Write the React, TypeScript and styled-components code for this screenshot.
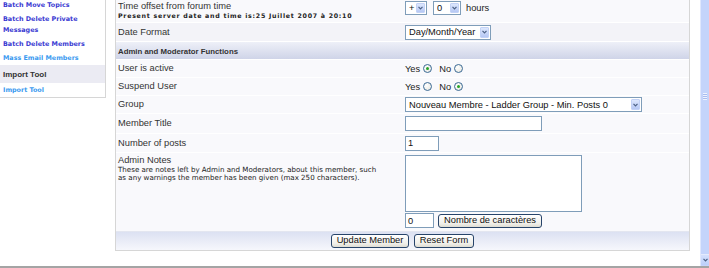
import React from "react";
import styled, { createGlobalStyle } from "styled-components";

const Global = createGlobalStyle`
  html, body { margin: 0; padding: 0; background: #fff; overflow: hidden; }
  body { font-family: "Liberation Sans", Arial, sans-serif; }
  * { box-sizing: border-box; }
`;

const Window = styled.div`
  width: 709px;
  height: 268px;
  display: flex;
  flex-direction: column;
  background: #fff;
  overflow: hidden;
`;

const Viewport = styled.div`
  height: 268px;
  display: flex;
  border-bottom: 2px solid #a4a4a4;
  overflow: hidden;
`;

const Page = styled.div`
  width: 700px;
  display: flex;
  align-items: flex-start;
  gap: 9px;
  padding-right: 10px;
  margin-top: -2px;
`;

/* ---------- sidebar ---------- */
const Sidebar = styled.nav`
  width: 106px;
  flex: none;
  border-right: 1px solid #d6d6d6;
  border-bottom: 1px solid #d6d6d6;
  background: #fff;
  display: flex;
  flex-direction: column;
`;

const SideLink = styled.a<{ $light?: boolean }>`
  display: block;
  padding: 2px 3px 1px 3px;
  line-height: 11px;
  font-family: "DejaVu Sans", Verdana, sans-serif;
  font-weight: bold;
  font-size: 6.4px;
  color: ${(p) => (p.$light ? "#3a9af0" : "#3a3ad2")};
  text-decoration: none;
`;

const SideHead = styled.div`
  height: 18px;
  display: flex;
  align-items: center;
  padding: 1px 3px 0 3px;
  background: #ebebf3;
  font-weight: bold;
  font-size: 8px;
  color: #333;
`;

/* ---------- main panel ---------- */
const Panel = styled.section`
  width: 575px;
  flex: none;
  border-left: 1px solid #d6d6d6;
  border-right: 1px solid #d6d6d6;
  border-bottom: 1px solid #d6d6d6;
  background: #f8f8fb;
  display: flex;
  flex-direction: column;
`;

const Row = styled.div<{ $h: number; $shade?: boolean; $top?: boolean }>`
  height: ${(p) => p.$h}px;
  display: grid;
  grid-template-columns: 289px 1fr;
  align-items: ${(p) => (p.$top ? "start" : "center")};
  background: ${(p) => (p.$shade ? "#f3f3f8" : "#f9f9fc")};
  border-top: 1px solid #ffffff;
`;

const LabelCell = styled.div<{ $pt?: number }>`
  padding-left: 2px;
  padding-top: ${(p) => p.$pt ?? 0}px;
  color: #333;
`;

const Label = styled.div`
  font-size: 9.3px;
  line-height: 11px;
  white-space: nowrap;
`;

const Note = styled.div<{ $bold?: boolean; $w?: number }>`
  font-family: "DejaVu Sans", Verdana, sans-serif;
  font-size: ${(p) => (p.$bold ? "6.3px" : "7.1px")};
  font-weight: ${(p) => (p.$bold ? "bold" : "normal")};
  letter-spacing: ${(p) => (p.$bold ? "0.72px" : "0")};
  line-height: ${(p) => (p.$bold ? "8px" : "8.4px")};
  max-width: ${(p) => (p.$w ? `${p.$w}px` : "none")};
  color: #222;
  white-space: ${(p) => (p.$w ? "normal" : "nowrap")};
`;

const ControlCell = styled.div<{ $pt?: number; $col?: boolean }>`
  display: flex;
  flex-direction: ${(p) => (p.$col ? "column" : "row")};
  align-items: ${(p) => (p.$col ? "flex-start" : "center")};
  gap: ${(p) => (p.$col ? "1px" : "0")};
  padding-top: ${(p) => p.$pt ?? 0}px;
  font-size: 9.3px;
  color: #222;
`;

const Header = styled.div`
  height: 18px;
  display: flex;
  align-items: center;
  padding: 1px 2px 0 2px;
  background: linear-gradient(to bottom, #eef0f8, #cfd4e8);
  font-weight: bold;
  font-size: 7.8px;
  color: #333;
  border-top: 1px solid #ffffff;
`;

const Footer = styled.div`
  height: 19px;
  display: flex;
  align-items: center;
  justify-content: center;
  gap: 5px;
  background: linear-gradient(to bottom, #dce1f2, #f6f7fc);
  border-top: 1px solid #e3e6f0;
`;

/* ---------- controls ---------- */
const SelectBox = styled.div<{ $w: number; $h: number }>`
  width: ${(p) => p.$w}px;
  height: ${(p) => p.$h}px;
  border: 1px solid #7f9db9;
  background: #fff;
  display: flex;
  align-items: center;
  padding: 1px 1px 1px 3px;
  font-size: 9.3px;
  color: #111;
`;

const SelectText = styled.span`
  flex: 1;
  white-space: nowrap;
  overflow: hidden;
`;

const DropBtn = styled.span`
  width: 9px;
  align-self: stretch;
  border-radius: 1px;
  background: linear-gradient(to bottom, #dde7fd, #b6c8f4);
  border: 1px solid #c3d2f6;
  display: flex;
  align-items: center;
  justify-content: center;
`;

const Chevron = () => (
  <svg width="5" height="4" viewBox="0 0 5 4">
    <path d="M0.5 0.8 L2.5 2.8 L4.5 0.8" fill="none" stroke="#4d6185" strokeWidth="1.2" />
  </svg>
);

const Select: React.FC<{ w: number; h: number; value: string }> = ({ w, h, value }) => (
  <SelectBox $w={w} $h={h}>
    <SelectText>{value}</SelectText>
    <DropBtn>
      <Chevron />
    </DropBtn>
  </SelectBox>
);

const TextInput = styled.div<{ $w: number; $h: number }>`
  width: ${(p) => p.$w}px;
  height: ${(p) => p.$h}px;
  border: 1px solid #7f9db9;
  background: #fff;
  padding-left: 2px;
  display: flex;
  align-items: center;
  font-size: 9.3px;
  color: #111;
`;

const Button = styled.button<{ $w: number; $h: number }>`
  width: ${(p) => p.$w}px;
  height: ${(p) => p.$h}px;
  padding: 0;
  border: 1px solid #27446a;
  border-radius: 3px;
  background: linear-gradient(to bottom, #ffffff, #f0efea 70%, #dedcd2);
  font-family: "Liberation Sans", Arial, sans-serif;
  font-size: 9.3px;
  color: #111;
  line-height: 1;
`;

const Word = styled.span<{ $ml?: number; $mr?: number }>`
  margin-left: ${(p) => p.$ml ?? 0}px;
  margin-right: ${(p) => p.$mr ?? 0}px;
  font-size: 9.3px;
  color: #222;
`;

const Radio = styled.span<{ $on?: boolean }>`
  width: 9px;
  height: 9px;
  border-radius: 50%;
  border: 1px solid #3b6a95;
  background: radial-gradient(circle at 35% 35%, #ffffff, #e4e4dc);
  display: inline-flex;
  align-items: center;
  justify-content: center;
  &::after {
    content: "";
    width: 3px;
    height: 3px;
    border-radius: 50%;
    background: ${(p) => (p.$on ? "#27a327" : "transparent")};
  }
`;

const TextArea = styled.div`
  width: 177px;
  height: 57px;
  border: 1px solid #7f9db9;
  background: #fff;
`;

const CountLine = styled.div`
  display: flex;
  align-items: center;
  gap: 4px;
`;

/* ---------- scrollbar ---------- */
const ScrollBar = styled.div`
  width: 9px;
  flex: none;
  display: flex;
  flex-direction: column;
  background: #c4d4fb;
  border-left: 1px solid #dfe7fd;
`;

const Thumb = styled.div`
  flex: 1;
  display: flex;
  justify-content: center;
  padding-top: 93px;
`;

const Grip = styled.div`
  width: 4px;
  height: 7px;
  background: repeating-linear-gradient(to bottom, #eef3ff 0 1px, #a8bdf0 1px 2px);
`;

const ArrowBtn = styled.div`
  height: 11px;
  margin-bottom: 1px;
  display: flex;
  align-items: center;
  justify-content: center;
  background: linear-gradient(to bottom, #d4e0fd, #bccff9);
  border-top: 1px solid #e4ebfd;
`;

export default function App() {
  return (
    <Window>
      <Global />
      <Viewport>
        <Page>
          <Sidebar>
            <SideLink href="#">Batch Move Topics</SideLink>
            <SideLink href="#">Batch Delete Private Messages</SideLink>
            <SideLink href="#">Batch Delete Members</SideLink>
            <SideLink href="#" $light>
              Mass Email Members
            </SideLink>
            <SideHead>Import Tool</SideHead>
            <SideLink href="#" $light>
              Import Tool
            </SideLink>
          </Sidebar>

          <Panel>
            <Row $h={24} $top>
              <LabelCell $pt={2}>
                <Label>Time offset from forum time</Label>
                <Note $bold>Present server date and time is:25 Juillet 2007 à 20:10</Note>
              </LabelCell>
              <ControlCell $pt={2}>
                <Select w={22} h={14} value="+" />
                <Word $ml={6} />
                <Select w={28} h={14} value="0" />
                <Word $ml={5}>hours</Word>
              </ControlCell>
            </Row>
            <Row $h={19} $shade>
              <LabelCell>
                <Label>Date Format</Label>
              </LabelCell>
              <ControlCell>
                <Select w={86} h={15} value="Day/Month/Year" />
              </ControlCell>
            </Row>
            <Header>Admin and Moderator Functions</Header>
            <Row $h={18}>
              <LabelCell>
                <Label>User is active</Label>
              </LabelCell>
              <ControlCell>
                <Word $mr={3}>Yes</Word>
                <Radio $on />
                <Word $ml={7} $mr={3}>
                  No
                </Word>
                <Radio />
              </ControlCell>
            </Row>
            <Row $h={18}>
              <LabelCell>
                <Label>Suspend User</Label>
              </LabelCell>
              <ControlCell>
                <Word $mr={3}>Yes</Word>
                <Radio />
                <Word $ml={7} $mr={3}>
                  No
                </Word>
                <Radio $on />
              </ControlCell>
            </Row>
            <Row $h={18}>
              <LabelCell>
                <Label>Group</Label>
              </LabelCell>
              <ControlCell>
                <Select w={237} h={15} value="Nouveau Membre - Ladder Group - Min. Posts 0" />
              </ControlCell>
            </Row>
            <Row $h={20}>
              <LabelCell>
                <Label>Member Title</Label>
              </LabelCell>
              <ControlCell>
                <TextInput $w={137} $h={15} />
              </ControlCell>
            </Row>
            <Row $h={19}>
              <LabelCell>
                <Label>Number of posts</Label>
              </LabelCell>
              <ControlCell>
                <TextInput $w={34} $h={15}>1</TextInput>
              </ControlCell>
            </Row>
            <Row $h={79} $top>
              <LabelCell $pt={2}>
                <Label>Admin Notes</Label>
                <Note $w={268}>
                  These are notes left by Admin and Moderators, about this member, such as any warnings the
                  member has been given (max 250 characters).
                </Note>
              </LabelCell>
              <ControlCell $pt={2} $col>
                <TextArea />
                <CountLine>
                  <TextInput $w={29} $h={15}>0</TextInput>
                  <Button $w={104} $h={14}>Nombre de caractères</Button>
                </CountLine>
              </ControlCell>
            </Row>
            <Footer>
              <Button $w={78} $h={14}>Update Member</Button>
              <Button $w={60} $h={14}>Reset Form</Button>
            </Footer>
          </Panel>
        </Page>
        <ScrollBar>
          <Thumb>
            <Grip />
          </Thumb>
          <ArrowBtn>
            <Chevron />
          </ArrowBtn>
        </ScrollBar>
      </Viewport>
    </Window>
  );
}
